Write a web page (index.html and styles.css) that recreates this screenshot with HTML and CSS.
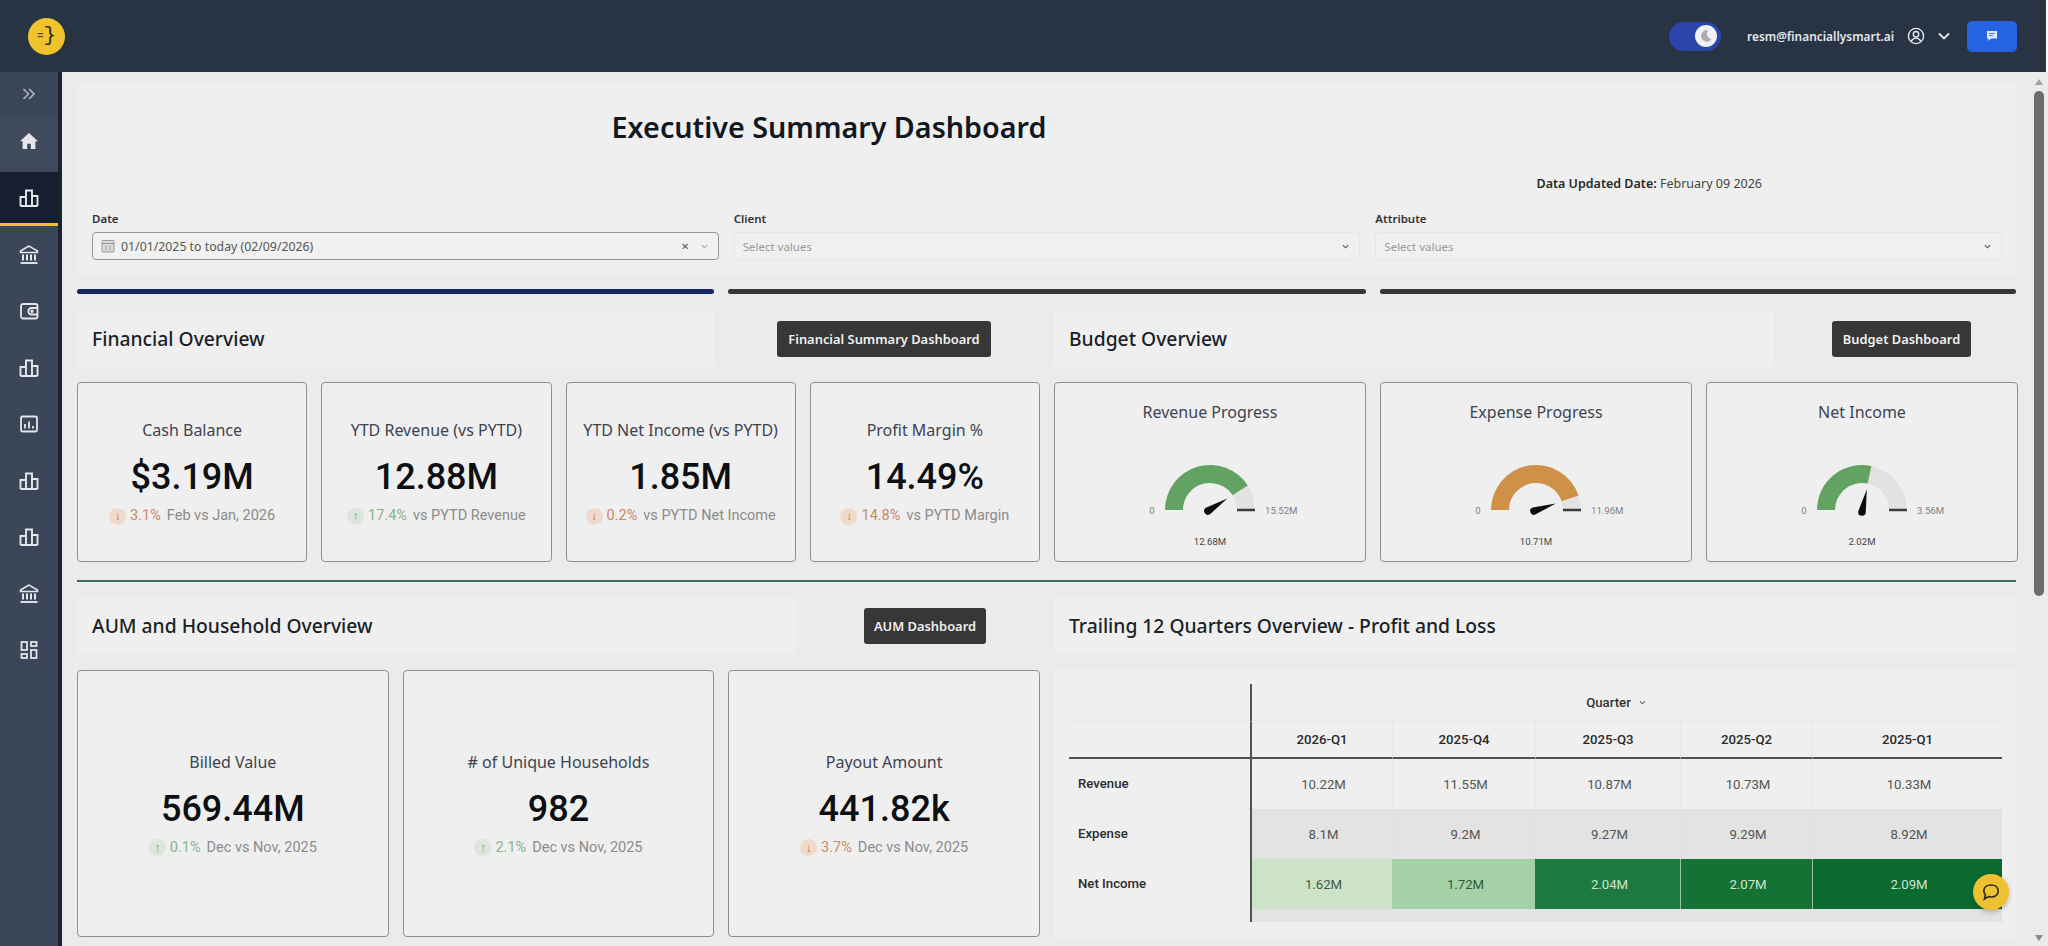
FILE: index.html
```html
<!DOCTYPE html>
<html lang="en">
<head>
<meta charset="utf-8">
<title>Executive Summary Dashboard</title>
<link rel="stylesheet" href="styles.css">
</head>
<body>
<svg class="defs" width="0" height="0" aria-hidden="true">
  <symbol id="i-bars" viewBox="0 0 20 20"><path d="M1.5 18V9h5.5v9M7 18V2.500h6V18M13 18V8h5.500v10M1.500 18h17" fill="none" stroke="currentColor" stroke-width="1.900"/></symbol>
  <symbol id="i-bank" viewBox="0 0 20 20"><path d="M10 1 1.500 6v1.500h17V6z" fill="none" stroke="currentColor" stroke-width="1.500"/><path d="M4 9.500v6M8 9.500v6M12 9.500v6M16 9.500v6" stroke="currentColor" stroke-width="2"/><path d="M1.500 18h17" stroke="currentColor" stroke-width="1.900"/></symbol>
</svg>

<header class="topbar">
  <div class="logo"><span class="logo-eq">=</span><span class="logo-br">}</span></div>
  <div class="top-right">
    <div class="toggle">
      <div class="knob"><svg width="14" height="14" viewBox="0 0 14 14"><path d="M9 1.500a5.600 5.600 0 1 0 3.600 8.400A5.200 5.200 0 0 1 9 1.500z" fill="#a9acb2"/></svg></div>
    </div>
    <span class="email">resm@financiallysmart.ai</span>
    <svg class="user" width="18" height="18" viewBox="0 0 18 18" fill="none" stroke="#e6e8ec" stroke-width="1.400"><circle cx="9" cy="9" r="7.600"/><circle cx="9" cy="7.200" r="2.700"/><path d="M4.200 14.400c1-2.300 2.700-3.300 4.800-3.300s3.800 1 4.800 3.300"/></svg>
    <svg class="chev" width="12" height="8" viewBox="0 0 12 8" fill="none" stroke="#e6e8ec" stroke-width="1.800"><path d="M1 1.500 6 6.500l5-5"/></svg>
    <button class="chat-btn"><svg width="12" height="12" viewBox="0 0 12 12"><path d="M1 1h10v7.500H5L2.500 11V8.500H1z" fill="#dfe7fb"/><path d="M3 3.500h6M3 5.500h4" stroke="#2563e0" stroke-width=".8"/></svg></button>
  </div>
</header>

<div class="app">
  <nav class="sidebar">
    <div class="nav-item nav-toggle"><svg width="14" height="12" viewBox="0 0 14 12" fill="none" stroke="#b4bac4" stroke-width="1.500"><path d="M1.500 1 6.500 6l-5 5M7 1l5 5-5 5"/></svg></div>
    <div class="nav-item nav-home"><svg class="ico" viewBox="0 0 20 20"><path d="M10 2 1 10.200h2.600V18h4.600v-5.200h3.600V18h4.600v-7.800H19z" fill="currentColor"/></svg></div>
    <div class="nav-item nav-active"><svg class="ico"><use href="#i-bars"/></svg></div>
    <div class="nav-item"><svg class="ico"><use href="#i-bank"/></svg></div>
    <div class="nav-item"><svg class="ico" viewBox="0 0 20 20" fill="none" stroke="currentColor" stroke-width="1.800"><rect x="2" y="3" width="16.500" height="14.500" rx="2"/><path d="M18.500 7h-6a2.500 2.500 0 0 0 0 6.500h6"/><circle cx="13" cy="10.200" r=".8"/></svg></div>
    <div class="nav-item"><svg class="ico"><use href="#i-bars"/></svg></div>
    <div class="nav-item"><svg class="ico" viewBox="0 0 20 20" fill="none" stroke="currentColor" stroke-width="1.800"><rect x="2" y="2.500" width="16" height="15" rx="1.500"/><path d="M6 10v4.500M10 7.500v7M14 12v2.500"/></svg></div>
    <div class="nav-item"><svg class="ico"><use href="#i-bars"/></svg></div>
    <div class="nav-item"><svg class="ico"><use href="#i-bars"/></svg></div>
    <div class="nav-item"><svg class="ico"><use href="#i-bank"/></svg></div>
    <div class="nav-item"><svg class="ico" viewBox="0 0 20 20" fill="none" stroke="currentColor" stroke-width="1.800"><rect x="2.500" y="2" width="5.500" height="8"/><rect x="12" y="2" width="5.500" height="4"/><rect x="2.500" y="14" width="5.500" height="4"/><rect x="12" y="10" width="5.500" height="8"/></svg></div>
  </nav>

  <main class="main">
    <div class="content">
      <section class="panel top-panel">
        <h1 class="page-title">Executive Summary Dashboard</h1>
        <p class="updated"><b>Data Updated Date:</b> February 09 2026</p>
        <div class="filters">
          <div class="filter">
            <label class="filter-label">Date</label>
            <div class="select select-active">
              <svg class="cal" width="14" height="14" viewBox="0 0 14 14" fill="none" stroke="#9a9a9a"><rect x="1" y="1.500" width="12" height="11.500" rx="1" fill="#dcdcdc"/><path d="M1 4.500h12M5 6.500v5M9 6.500v5"/></svg>
              <span class="select-value">01/01/2025 to today (02/09/2026)</span>
              <span class="select-x">✕</span>
              <svg class="select-chev select-chev-light" width="7" height="5" viewBox="0 0 8 5" fill="none" stroke="currentColor" stroke-width="1.300"><path d="M1 1l3 3 3-3"/></svg>
            </div>
          </div>
          <div class="filter">
            <label class="filter-label">Client</label>
            <div class="select">
              <span class="select-ph">Select values</span>
              <svg class="select-chev" width="7" height="5" viewBox="0 0 8 5" fill="none" stroke="currentColor" stroke-width="1.300"><path d="M1 1l3 3 3-3"/></svg>
            </div>
          </div>
          <div class="filter">
            <label class="filter-label">Attribute</label>
            <div class="select">
              <span class="select-ph">Select values</span>
              <svg class="select-chev" width="7" height="5" viewBox="0 0 8 5" fill="none" stroke="currentColor" stroke-width="1.300"><path d="M1 1l3 3 3-3"/></svg>
            </div>
          </div>
        </div>
      </section>

      <div class="tabs">
        <div class="tab tab-on"></div>
        <div class="tab"></div>
        <div class="tab"></div>
      </div>

      <div class="split split-first">
        <div class="col">
          <div class="section-head">
            <div class="panel head-panel head-fin"><h2>Financial Overview</h2></div>
            <button class="dash-btn btn-fin">Financial Summary Dashboard</button>
          </div>
          <div class="cards cards-4">
            <article class="card kpi">
              <div class="kpi-title">Cash Balance</div>
              <div class="kpi-value">$3.19M</div>
              <div class="kpi-sub"><span class="arrow down">↓</span><span class="pct down-t">3.1%</span><span>Feb vs Jan, 2026</span></div>
            </article>
            <article class="card kpi">
              <div class="kpi-title">YTD Revenue (vs PYTD)</div>
              <div class="kpi-value">12.88M</div>
              <div class="kpi-sub"><span class="arrow up">↑</span><span class="pct up-t">17.4%</span><span>vs PYTD Revenue</span></div>
            </article>
            <article class="card kpi">
              <div class="kpi-title">YTD Net Income (vs PYTD)</div>
              <div class="kpi-value">1.85M</div>
              <div class="kpi-sub"><span class="arrow down">↓</span><span class="pct down-t">0.2%</span><span>vs PYTD Net Income</span></div>
            </article>
            <article class="card kpi">
              <div class="kpi-title">Profit Margin %</div>
              <div class="kpi-value">14.49%</div>
              <div class="kpi-sub"><span class="arrow down">↓</span><span class="pct down-t">14.8%</span><span>vs PYTD Margin</span></div>
            </article>
          </div>
        </div>
        <div class="col">
          <div class="section-head">
            <div class="panel head-panel head-bud"><h2>Budget Overview</h2></div>
            <button class="dash-btn btn-bud">Budget Dashboard</button>
          </div>
          <div class="cards cards-3">
            <article class="card gauge">
              <div class="gauge-title">Revenue Progress</div>
              <svg class="gauge-svg" viewBox="-155 -80 310 125">
                <path d="M37.770-24.470A45 45 0 0 1 45 0H27A27 27 0 0 0 22.660-14.680Z" fill="#e1e2e1"/>
                <path d="M-45 0A45 45 0 0 1 37.770-24.470L22.660-14.680A27 27 0 0 0-27 0Z" fill="#62a363"/>
                <path d="M27 0H45" stroke="#3a3a3a" stroke-width="2.500"/>
                <path d="M0-23 3.800 0A3.800 3.800 0 1 1-3.800 0Z" transform="translate(-2 1) rotate(57)" fill="#0c0c0c"/>
                <text class="g-lab" x="-58" y="3.500" text-anchor="middle">0</text>
                <text class="g-lab" x="55" y="3.500">15.52M</text>
                <text class="g-val" x="0" y="34.500" text-anchor="middle">12.68M</text>
              </svg>
            </article>
            <article class="card gauge">
              <div class="gauge-title">Expense Progress</div>
              <svg class="gauge-svg" viewBox="-155 -80 310 125">
                <path d="M42.600-14.500A45 45 0 0 1 45 0H27A27 27 0 0 0 25.560-8.700Z" fill="#e1e2e1"/>
                <path d="M-45 0A45 45 0 0 1 42.600-14.500L25.560-8.700A27 27 0 0 0-27 0Z" fill="#cf9048"/>
                <path d="M27 0H45" stroke="#3a3a3a" stroke-width="2.500"/>
                <path d="M0-23 3.800 0A3.800 3.800 0 1 1-3.800 0Z" transform="translate(-2 1) rotate(71)" fill="#0c0c0c"/>
                <text class="g-lab" x="-58" y="3.500" text-anchor="middle">0</text>
                <text class="g-lab" x="55" y="3.500">11.96M</text>
                <text class="g-val" x="0" y="34.500" text-anchor="middle">10.71M</text>
              </svg>
            </article>
            <article class="card gauge">
              <div class="gauge-title">Net Income</div>
              <svg class="gauge-svg" viewBox="-155 -80 310 125">
                <path d="M9.430-44A45 45 0 0 1 45 0H27A27 27 0 0 0 5.660-26.400Z" fill="#e1e2e1"/>
                <path d="M-45 0A45 45 0 0 1 9.430-44L5.660-26.400A27 27 0 0 0-27 0Z" fill="#62a363"/>
                <path d="M27 0H45" stroke="#3a3a3a" stroke-width="2.500"/>
                <path d="M0-23 3.800 0A3.800 3.800 0 1 1-3.800 0Z" transform="translate(0 2) rotate(12)" fill="#0c0c0c"/>
                <text class="g-lab" x="-58" y="3.500" text-anchor="middle">0</text>
                <text class="g-lab" x="55" y="3.500">3.56M</text>
                <text class="g-val" x="0" y="34.500" text-anchor="middle">2.02M</text>
              </svg>
            </article>
          </div>
        </div>
      </div>

      <div class="divider"></div>

      <div class="split split-second">
        <div class="col">
          <div class="section-head">
            <div class="panel head-panel head-aum"><h2>AUM and Household Overview</h2></div>
            <button class="dash-btn btn-aum">AUM Dashboard</button>
          </div>
          <div class="cards cards-3 cards-tall">
            <article class="card kpi">
              <div class="kpi-title">Billed Value</div>
              <div class="kpi-value">569.44M</div>
              <div class="kpi-sub"><span class="arrow up">↑</span><span class="pct up-t">0.1%</span><span>Dec vs Nov, 2025</span></div>
            </article>
            <article class="card kpi">
              <div class="kpi-title"># of Unique Households</div>
              <div class="kpi-value">982</div>
              <div class="kpi-sub"><span class="arrow up">↑</span><span class="pct up-t">2.1%</span><span>Dec vs Nov, 2025</span></div>
            </article>
            <article class="card kpi">
              <div class="kpi-title">Payout Amount</div>
              <div class="kpi-value">441.82k</div>
              <div class="kpi-sub"><span class="arrow down">↓</span><span class="pct down-t">3.7%</span><span>Dec vs Nov, 2025</span></div>
            </article>
          </div>
        </div>
        <div class="col">
          <div class="section-head">
            <div class="panel head-panel head-full"><h2>Trailing 12 Quarters Overview - Profit and Loss</h2></div>
          </div>
          <div class="panel table-panel">
            <div class="pivot">
              <div class="p-corner"></div>
              <div class="p-quarter">Quarter <svg width="7" height="5" viewBox="0 0 8 5" fill="none" stroke="#666" stroke-width="1.200"><path d="M1 1l3 3 3-3"/></svg></div>
              <div class="p-corner p-corner2"></div>
              <div class="p-h p-first">2026-Q1</div><div class="p-h">2025-Q4</div><div class="p-h">2025-Q3</div><div class="p-h">2025-Q2</div><div class="p-h">2025-Q1</div>
              <div class="p-label">Revenue</div>
              <div class="p-c p-first">10.22M</div><div class="p-c">11.55M</div><div class="p-c">10.87M</div><div class="p-c">10.73M</div><div class="p-c">10.33M</div>
              <div class="p-label">Expense</div>
              <div class="p-c p-first p-gray">8.1M</div><div class="p-c p-gray">9.2M</div><div class="p-c p-gray">9.27M</div><div class="p-c p-gray">9.29M</div><div class="p-c p-gray">8.92M</div>
              <div class="p-label">Net Income</div>
              <div class="p-c p-first p-g1">1.62M</div><div class="p-c p-g2">1.72M</div><div class="p-c p-g3">2.04M</div><div class="p-c p-g4">2.07M</div><div class="p-c p-g5">2.09M</div>
              <div class="p-end"></div>
              <div class="p-fill"></div>
            </div>
          </div>
        </div>
      </div>
    </div>

    <div class="scrollbar">
      <span class="sb-up"></span>
      <div class="sb-thumb"></div>
      <span class="sb-down"></span>
    </div>

    <button class="fab"><svg width="20" height="20" viewBox="0 0 20 20" fill="none" stroke="#2f2a1a" stroke-width="1.700"><path d="M10 3c4.200 0 7.200 2.500 7.200 6s-3 6-7.200 6c-1 0-1.800-.1-2.600-.4L3.500 17l.9-4.200C3.300 11.800 2.800 10.500 2.800 9 2.800 5.500 5.800 3 10 3z"/></svg></button>
  </main>
</div>
</body>
</html>
```

FILE: styles.css
```css
* { box-sizing: border-box; }
html, body { margin: 0; height: 946px; overflow: hidden; background: #fff; }
body { font-family: "Noto Sans", "Liberation Sans", sans-serif; color: #222; width: 2048px; }
.defs { position: absolute; }
h1, h2, p { margin: 0; }
button { font: inherit; border: 0; cursor: pointer; }

/* top bar */
.topbar { height: 72px; width: 2046px; background: #283444; display: flex; align-items: center; justify-content: space-between; padding: 0 29px 0 28px; }
.logo { width: 37px; height: 37px; border-radius: 50%; background: #f0c32c; display: flex; align-items: center; justify-content: center; color: #2b2b24; font-family: "Liberation Mono", monospace; line-height: 1; }
.logo-eq { font-size: 11px; font-weight: 700; color: #6b4c10; }
.logo-br { font-size: 21px; margin-top: -2px; }
.top-right { display: flex; align-items: center; }
.toggle { width: 52px; height: 29px; border-radius: 15px; background: #2b45aa; display: flex; align-items: center; justify-content: flex-end; padding-right: 4px; }
.knob { width: 22px; height: 22px; border-radius: 50%; background: #f1f1f1; display: flex; align-items: center; justify-content: center; }
.email { margin-left: 26px; font-size: 11.9px; font-weight: 600; color: #e4e6ea; width: 144px; white-space: nowrap; }
.user { margin-left: 16px; }
.chev { margin-left: 13px; }
.chat-btn { margin-left: 17px; width: 50px; height: 31px; border-radius: 5px; background: #2563e0; display: flex; align-items: center; justify-content: center; }

/* shell */
.app { display: flex; height: 874px; }
.sidebar { width: 62px; flex: none; background: #3b4658; border-right: 4px solid #1a2435; display: flex; flex-direction: column; color: #e4e6ea; }
.nav-item { height: 56.5px; flex: none; display: flex; align-items: center; justify-content: center; }
.nav-toggle { height: 43px; }
.nav-home { padding-bottom: 4px; background: #3f4a5c; }
.nav-active { background: #161f2f; height: 54px; border-bottom: 3px solid #efc02f; padding-top: 2px; margin-bottom: 1px; }
.ico { width: 20px; height: 20px; display: block; }
.main { flex: 1; display: flex; background: #ebebec; padding: 12px 2px 0 15px; position: relative; min-width: 0; }
.content { width: 1939px; flex: none; }
.panel { background: #efefef; border-radius: 3px; }

/* top panel */
.top-panel { height: 191px; padding-top: 24px; }
.page-title { width: 1504px; text-align: center; font-size: 28.7px; line-height: 38px; font-weight: 600; color: #12181f; white-space: nowrap; }
.updated { margin-top: 28px; padding-right: 254px; text-align: right; font-size: 12.5px; line-height: 20px; color: #444; }
.updated b { font-weight: 600; color: #2a2a2a; }
.filters { margin-top: 17px; padding: 0 14px 0 15px; display: grid; grid-template-columns: repeat(3, 1fr); gap: 15px; }
.filter-label { display: block; font-size: 11.5px; line-height: 16px; font-weight: 600; color: #333; margin-bottom: 5px; }
.select { height: 28px; border-radius: 4px; border: 1px solid #e6e6e6; background: #f0f0f0; display: flex; align-items: center; padding: 0 10px 0 8px; font-size: 11.5px; }
.select-active { border: 1.5px solid #969696; background: #f1f1f1; }
.cal { margin-right: 6px; }
.select-value { color: #555; flex: 1; font-size: 12.3px; }
.select-ph { color: #9a9a9a; flex: 1; }
.select-x { color: #555; font-size: 10px; margin-right: 12px; }
.select-chev { color: #555; }
.select-chev-light { color: #a5a5a5; }

.tabs { margin-top: 14px; display: grid; grid-template-columns: 637px 638px 636px; column-gap: 14px; }
.tab { height: 5px; border-radius: 3px; background: #363636; }
.tab-on { background: #14265e; }

/* sections */
.split { display: grid; grid-template-columns: 963px 962px; column-gap: 14px; }
.split-first { margin-top: 17px; }
.split-second { margin-top: 16px; }
.section-head { height: 56px; display: flex; align-items: center; }
.head-panel { height: 56px; display: flex; align-items: center; padding: 0 0 1px 15px; }
.head-panel h2 { font-size: 19.3px; font-weight: 500; color: #1a1f27; white-space: nowrap; }
.head-fin { width: 637px; }
.head-bud { width: 720px; }
.head-aum { width: 719px; }
.head-full { width: 100%; }
.dash-btn { height: 36px; border-radius: 3px; background: #373737; color: #f0f0f0; font-size: 12.9px; font-weight: 600; white-space: nowrap; padding: 0; }
.btn-fin { width: 214px; margin-left: 63px; }
.btn-bud { width: 139px; margin-left: 58px; }
.btn-aum { width: 122px; margin-left: 68px; }

.cards { margin-top: 15px; display: grid; column-gap: 14px; height: 180px; }
.cards-4 { grid-template-columns: repeat(4, 1fr); }
.cards-3 { grid-template-columns: repeat(3, 1fr); }
.cards-tall { height: 267px; margin-top: 16px; }
.card { background: #efefef; border: 1.5px solid #8f8f8f; border-radius: 4px; }
.kpi { display: flex; flex-direction: column; align-items: center; justify-content: center; }
.kpi-title { font-size: 16px; line-height: 24px; color: #3c4450; white-space: nowrap; }
.kpi-value { font-family: Roboto, sans-serif; font-weight: 500; font-size: 36px; line-height: 48px; margin-top: 11px; color: #0d0f12; }
.kpi-sub { font-family: Roboto, sans-serif; font-size: 14.5px; line-height: 20px; margin-top: 5px; color: #8b8b8b; display: flex; align-items: center; white-space: nowrap; }
.arrow { width: 17px; height: 17px; border-radius: 50%; display: flex; align-items: center; justify-content: center; font-size: 12px; margin-right: 4px; }
.arrow.down { background: #f0dacc; color: #c9764a; }
.arrow.up { background: #dde5dd; color: #58b26a; }
.pct { margin-right: 6px; }
.down-t { color: #c98a66; }
.up-t { color: #84b48c; }

/* gauges */
.gauge { padding-top: 17px; display: flex; flex-direction: column; align-items: center; }
.gauge-title { font-size: 16px; line-height: 24px; color: #3c4450; }
.gauge-svg { display: block; width: 310px; height: 125px; margin-top: 6px; }
.g-lab { font-family: Roboto, sans-serif; font-size: 9.6px; fill: #808080; }
.g-val { font-family: Roboto, sans-serif; font-size: 9.6px; fill: #444; }

.divider { margin-top: 18px; height: 2px; background: #3f6a5d; }

/* pivot */
.table-panel { margin-top: 16px; height: 268px; padding: 14px 14px 0 15px; }
.pivot { display: grid; grid-template-columns: 181px 142px 143px 145px 132px 190px; grid-template-rows: 37px 38px 50px 50px 50px 13px; font-family: Roboto, sans-serif; font-size: 13.2px; }
.p-corner2 { border-top: 1px solid #e6e6e6; border-bottom: 2px solid #4e5156; }
.p-quarter { grid-column: 2 / 7; border-left: 2px solid #4e5156; display: flex; align-items: center; justify-content: center; gap: 8px; padding-right: 22px; font-weight: 500; color: #333; }
.p-h { border-top: 1px solid #e6e6e6; border-bottom: 2px solid #4e5156; border-left: 1px solid #e8e8e8; display: flex; align-items: center; justify-content: center; font-weight: 500; color: #2a2a2a; }
.p-label { display: flex; align-items: center; padding-left: 9px; font-weight: 500; color: #2c2c2c; border-bottom: 1px solid #ebebeb; }
.p-c { display: flex; align-items: center; justify-content: center; border-left: 1px solid #e8e8e8; color: #555; padding-left: 3px; }
.p-h.p-first, .p-c.p-first { border-left: 2px solid #4e5156; }
.p-gray { background: #e3e3e3; border-left-color: #e0e0e0; }
.p-g1 { background: #cce3c7; color: #3e5a44; }
.p-g2 { background: #a4d2a6; border-left-color: #a4d2a6; color: #2f5b39; }
.p-g3 { background: #1c7a40; border-left-color: #1c7a40; color: #cfe6cf; }
.p-g4 { background: #157234; border-left-color: #9cc7a4; color: #cfe6cf; }
.p-g5 { background: #0a6a30; border-left-color: #9cc7a4; color: #cfe6cf; }
.p-fill { grid-column: 2 / 7; background: #e3e3e3; border-left: 2px solid #4e5156; }

/* scrollbar */
.scrollbar { margin-left: 18px; width: 10px; flex: none; display: flex; flex-direction: column; align-items: center; height: 874px; margin-top: -12px; position: relative; }
.sb-up { margin-top: 7px; width: 0; height: 0; border: 4px solid transparent; border-top: 0; border-bottom: 6px solid #a2a2a2; }
.sb-thumb { margin-top: 6px; width: 10px; height: 505px; background: #6c6c6c; border-radius: 5px; }
.sb-down { margin-top: auto; margin-bottom: 5px; width: 0; height: 0; border: 4px solid transparent; border-bottom: 0; border-top: 6px solid #8a8a8a; }

.fab { position: absolute; left: 1911px; top: 802px; width: 36px; height: 36px; border-radius: 50%; background: #edc12f; box-shadow: 0 2px 5px rgba(0,0,0,.25); display: flex; align-items: center; justify-content: center; padding: 0; }
```
